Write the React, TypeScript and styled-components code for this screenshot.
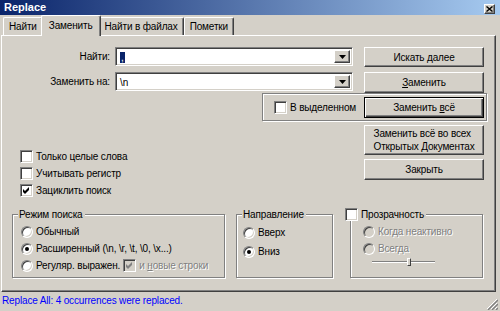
import React from 'react';
import styled, { createGlobalStyle, css } from 'styled-components';

const GlobalStyle = createGlobalStyle`
  html, body {
    margin: 0;
    padding: 0;
    background: #d4d0c8;
  }
  body {
    font-family: 'Liberation Sans', Arial, sans-serif;
    font-size: 10px;
    letter-spacing: -0.15px;
    color: #000;
  }
  *, *::before, *::after {
    box-sizing: border-box;
  }
`;

const raised = css`
  border: 1px solid;
  border-color: #fff #404040 #404040 #fff;
  box-shadow: inset -1px -1px #808080, inset 1px 1px #d4d0c8;
`;

const sunken = css`
  border: 1px solid;
  border-color: #808080 #fff #fff #808080;
  box-shadow: inset 1px 1px #404040, inset -1px -1px #d4d0c8;
`;

const etched = css`
  border: 1px solid #808080;
  box-shadow: inset 1px 1px #fff, 1px 1px #fff;
`;

const Window = styled.div`
  width: 500px;
  height: 311px;
  display: flex;
  flex-direction: column;
  background: #d4d0c8;
  overflow: hidden;
`;

const TitleBar = styled.div`
  flex: none;
  height: 15px;
  display: flex;
  align-items: center;
  justify-content: space-between;
  padding: 0 5px 0 4px;
  background: linear-gradient(to right, #0a246a, #a6caf0);
`;

const Title = styled.span`
  color: #fff;
  font-weight: bold;
  font-size: 11px;
  letter-spacing: 0;
  line-height: 15px;
`;

const CloseButton = styled.div`
  width: 11px;
  height: 10px;
  margin-top: 3px;
  background: #d4d0c8;
  ${raised};
  display: flex;
  align-items: center;
  justify-content: center;
`;

const TabStrip = styled.div`
  flex: none;
  height: 21px;
  margin-bottom: -1px;
  padding-left: 3px;
  display: flex;
  align-items: flex-end;
  position: relative;
  z-index: 1;
`;

const Tab = styled.div<{ $active?: boolean }>`
  height: 18px;
  margin-bottom: 1px;
  padding: 0 5px;
  display: flex;
  align-items: center;
  background: #d4d0c8;
  border-top: 1px solid #fff;
  border-left: 1px solid #fff;
  border-right: 1px solid #404040;
  border-radius: 2px 2px 0 0;
  box-shadow: inset -1px 0 #808080;
  white-space: nowrap;

  ${p =>
    p.$active &&
    css`
      height: 21px;
      margin: 0 -2px;
      padding: 0 7px 2px;
      position: relative;
      z-index: 1;
    `}
`;

const Panel = styled.div`
  flex: none;
  height: 257px;
  margin: 0 4px 0 1px;
  padding: 11px 11px 0 0;
  border: 1px solid;
  border-color: #fff #404040 #404040 #fff;
  box-shadow: inset -1px -1px #808080;
  display: flex;
  flex-direction: column;
`;

const FieldRow = styled.div`
  display: flex;
  align-items: flex-start;
  height: 20px;

  & + & {
    margin-top: 5px;
  }
`;

const FieldLabel = styled.label`
  width: 108px;
  margin-right: 5px;
  text-align: right;
  line-height: 19px;
`;

const Combo = styled.div`
  width: 238px;
  height: 19px;
  padding: 2px;
  background: #fff;
  ${sunken};
  display: flex;
  align-items: stretch;
`;

const ComboText = styled.div`
  flex: 1;
  padding-left: 2px;
  line-height: 15px;
  white-space: pre;
`;

const Selected = styled.span`
  background: #0a246a;
  color: #fff;
  padding: 0 1px;
`;

const DropButton = styled.div`
  width: 16px;
  background: #d4d0c8;
  ${raised};
  display: flex;
  align-items: center;
  justify-content: center;
`;

const Button = styled.div<{ $h?: number; $default?: boolean }>`
  flex: none;
  width: 120px;
  height: ${p => p.$h ?? 20}px;
  margin-left: auto;
  background: #d4d0c8;
  ${raised};
  display: flex;
  align-items: center;
  justify-content: center;
  line-height: 13px;

  ${p =>
    p.$default &&
    css`
      border: 1px solid #000;
      box-shadow: inset 1px 1px #fff, inset -1px -1px #404040, inset -2px -2px #808080;
    `}
`;

const ButtonText = styled.span`
  text-align: left;
`;

const SelectionGroup = styled.div`
  align-self: flex-end;
  width: 225px;
  height: 28px;
  margin: 1px -3px 0 0;
  padding: 0 2px 0 11px;
  ${etched};
  display: flex;
  align-items: center;
`;

const Middle = styled.div`
  display: flex;
  align-items: flex-start;
`;

const Options = styled.div`
  margin-left: 18px;
  padding-top: 27px;
  display: flex;
  flex-direction: column;
`;

const Actions = styled.div`
  margin-left: auto;
  margin-top: 4px;
  display: flex;
  flex-direction: column;
  gap: 4px;
`;

const OptionRow = styled.div<{ $h?: number }>`
  height: ${p => p.$h ?? 17}px;
  display: flex;
  align-items: center;
  gap: 3px;
  white-space: nowrap;
`;

const Muted = styled.span`
  color: #808080;
  text-shadow: 1px 1px #fff;
`;

const CheckBox = styled.span<{ $disabled?: boolean }>`
  flex: none;
  width: 13px;
  height: 13px;
  background: ${p => (p.$disabled ? '#d4d0c8' : '#fff')};
  ${sunken};
  display: flex;
  align-items: center;
  justify-content: center;
`;

const Radio = styled.span<{ $checked?: boolean; $disabled?: boolean }>`
  flex: none;
  position: relative;
  width: 12px;
  height: 12px;
  border-radius: 50%;
  border: 1px solid;
  border-color: #808080 #fff #fff #808080;
  box-shadow: inset 1px 1px #404040, inset -1px -1px #d4d0c8;
  background: ${p => (p.$disabled ? '#d4d0c8' : '#fff')};

  ${p =>
    p.$checked &&
    css`
      &::after {
        content: '';
        position: absolute;
        left: 3px;
        top: 3px;
        width: 4px;
        height: 4px;
        border-radius: 50%;
        background: #000;
      }
    `}
`;

const GroupsRow = styled.div`
  margin-top: 9px;
  padding-left: 10px;
  display: flex;
  align-items: flex-start;
`;

const Group = styled.fieldset<{ $w: number; $ml?: number }>`
  width: ${p => p.$w}px;
  height: 70px;
  min-width: 0;
  margin: 0 0 0 ${p => p.$ml ?? 0}px;
  padding: 0;
  ${etched};
`;

const Legend = styled.legend<{ $ml?: number }>`
  margin-left: ${p => p.$ml ?? 5}px;
  padding: 0 2px 0 1px;
  background: #d4d0c8;
  line-height: 13px;
  display: flex;
  align-items: center;
  gap: 3px;
`;

const GroupBody = styled.div<{ $pl: number }>`
  padding: 2px 0 0 ${p => p.$pl}px;
`;

const Slider = styled.div`
  position: relative;
  width: 63px;
  height: 10px;
  margin: 0 0 0 9px;
  display: flex;
  align-items: center;
`;

const SliderTrack = styled.div`
  width: 100%;
  height: 2px;
  border-top: 1px solid #808080;
  border-bottom: 1px solid #fff;
`;

const SliderThumb = styled.div`
  position: absolute;
  left: 35px;
  top: 1px;
  width: 4px;
  height: 8px;
  background: #d4d0c8;
  border: 1px solid;
  border-color: #fff #404040 #404040 #fff;
`;

const StatusBar = styled.div`
  flex: none;
  height: 16px;
  padding-left: 2px;
  display: flex;
  align-items: center;
  justify-content: space-between;
  color: #0000ff;
`;

const Grip = styled.svg`
  align-self: flex-end;
  margin: 0 2px -2px 0;
`;

const CheckMark = ({ color = '#000' }: { color?: string }) => (
  <svg width="7" height="7" viewBox="0 0 7 7">
    <path d="M0 2 L2 4 L6 0 L6 3 L2 7 L0 5 Z" fill={color} />
  </svg>
);

const Box = ({ checked, disabled }: { checked?: boolean; disabled?: boolean }) => (
  <CheckBox $disabled={disabled}>{checked && <CheckMark color={disabled ? '#808080' : '#000'} />}</CheckBox>
);

const Arrow = () => (
  <svg width="7" height="4" viewBox="0 0 7 4">
    <path d="M0 0 H7 L3.5 4 Z" fill="#000" />
  </svg>
);

export default function App() {
  return (
    <>
      <GlobalStyle />
      <Window>
        <TitleBar>
          <Title>Replace</Title>
          <CloseButton>
            <svg width="7" height="6" viewBox="0 0 7 6">
              <path d="M0.5 0.5 L6.5 5.5 M6.5 0.5 L0.5 5.5" stroke="#000" strokeWidth="1.4" />
            </svg>
          </CloseButton>
        </TitleBar>

        <TabStrip>
          <Tab>Найти</Tab>
          <Tab $active>Заменить</Tab>
          <Tab>Найти в файлах</Tab>
          <Tab>Пометки</Tab>
        </TabStrip>

        <Panel>
          <FieldRow>
            <FieldLabel>Найти:</FieldLabel>
            <Combo>
              <ComboText>
                <Selected>,</Selected>
              </ComboText>
              <DropButton>
                <Arrow />
              </DropButton>
            </Combo>
            <Button>Искать далее</Button>
          </FieldRow>
          <FieldRow>
            <FieldLabel>Заменить на:</FieldLabel>
            <Combo>
              <ComboText>\n</ComboText>
              <DropButton>
                <Arrow />
              </DropButton>
            </Combo>
            <Button $h={21}>
              <span>
                <u>З</u>аменить
              </span>
            </Button>
          </FieldRow>

          <SelectionGroup>
            <OptionRow>
              <Box />
              <span>В выделенном</span>
            </OptionRow>
            <Button $h={21} $default>
              <span>
                Заменить <u>в</u>сё
              </span>
            </Button>
          </SelectionGroup>

          <Middle>
            <Options>
              <OptionRow>
                <Box />
                <span>Только целые слова</span>
              </OptionRow>
              <OptionRow>
                <Box />
                <span>Учитывать регистр</span>
              </OptionRow>
              <OptionRow>
                <Box checked />
                <span>Зациклить поиск</span>
              </OptionRow>
            </Options>
            <Actions>
              <Button $h={30}>
                <ButtonText>
                  Заменить всё во всех
                  <br />
                  Открытых Документах
                </ButtonText>
              </Button>
              <Button $h={21}>Закрыть</Button>
            </Actions>
          </Middle>

          <GroupsRow>
            <Group $w={213}>
              <Legend>Режим поиска</Legend>
              <GroupBody $pl={8}>
                <OptionRow>
                  <Radio />
                  <span>Обычный</span>
                </OptionRow>
                <OptionRow>
                  <Radio $checked />
                  <span>Расширенный (\n, \r, \t, \0, \x...)</span>
                </OptionRow>
                <OptionRow>
                  <Radio />
                  <span>Регуляр. выражен.</span>
                  <Box checked disabled />
                  <Muted>
                    и <u>н</u>овые строки
                  </Muted>
                </OptionRow>
              </GroupBody>
            </Group>

            <Group $w={97} $ml={11}>
              <Legend>Направление</Legend>
              <GroupBody $pl={6}>
                <OptionRow $h={19}>
                  <Radio />
                  <span>Вверх</span>
                </OptionRow>
                <OptionRow $h={19}>
                  <Radio $checked />
                  <span>Вниз</span>
                </OptionRow>
              </GroupBody>
            </Group>

            <Group $w={133} $ml={17}>
              <Legend $ml={-7}>
                <Box />
                <span>Прозрачность</span>
              </Legend>
              <GroupBody $pl={12}>
                <OptionRow>
                  <Radio $disabled />
                  <Muted>Когда неактивно</Muted>
                </OptionRow>
                <OptionRow>
                  <Radio $disabled />
                  <Muted>Всегда</Muted>
                </OptionRow>
                <Slider>
                  <SliderTrack />
                  <SliderThumb />
                </Slider>
              </GroupBody>
            </Group>
          </GroupsRow>
        </Panel>

        <StatusBar>
          <span>Replace All: 4 occurrences were replaced.</span>
          <Grip width="12" height="12" viewBox="0 0 12 12">
            <path d="M11 1 L1 11 M11 5 L5 11 M11 9 L9 11" stroke="#fff" strokeWidth="1" />
            <path d="M12 2 L2 12 M12 6 L6 12 M12 10 L10 12" stroke="#808080" strokeWidth="1.4" />
          </Grip>
        </StatusBar>
      </Window>
    </>
  );
}
